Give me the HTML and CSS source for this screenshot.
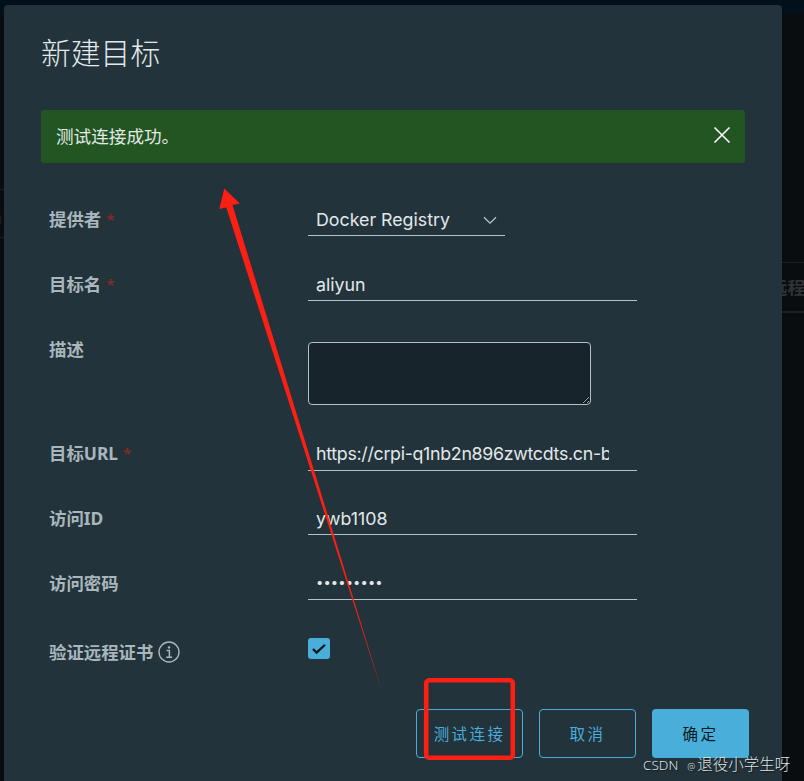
FILE: index.html
```html
<!DOCTYPE html>
<html lang="zh-CN">
<head>
<meta charset="utf-8">
<title>新建目标</title>
<link rel="stylesheet" href="styles.css">
</head>
<body>
<div class="behind">
  <div class="behind-left"><span class="behind-glyph">名</span></div>
  <div class="behind-right"><span>远程证</span></div>
</div>
<main class="modal">
  <h1 class="title">新建目标</h1>
  <div class="alert">
    <span class="alert-text">测试连接成功。</span>
    <svg class="alert-close" width="18" height="18" viewBox="0 0 18 18"><path d="M1.5 1.5 16.5 16.5M16.5 1.5 1.5 16.5" stroke="#fff" stroke-width="1.6" fill="none"/></svg>
  </div>
  <form class="form">
    <div class="row row-provider">
      <label class="label">提供者<i class="req">*</i></label>
      <div class="select-wrap">
        <select class="select"><option>Docker Registry</option></select>
        <svg class="chevron" width="14" height="9" viewBox="0 0 14 9"><path d="M1 1.2 7 7.2 13 1.2" stroke="#b9c4c9" stroke-width="1.3" fill="none"/></svg>
      </div>
    </div>
    <div class="row row-name">
      <label class="label">目标名<i class="req">*</i></label>
      <div class="field"><input class="input" value="aliyun"></div>
    </div>
    <div class="row row-desc">
      <label class="label">描述</label>
      <textarea class="textarea"></textarea>
    </div>
    <div class="row row-url">
      <label class="label">目标URL<i class="req">*</i></label>
      <div class="field"><input class="input" value="https://crpi-q1nb2n896zwtcdts.cn-beijing.personal.cr.aliyuncs.com"></div>
    </div>
    <div class="row row-id">
      <label class="label">访问ID</label>
      <div class="field"><input class="input" value="ywb1108"></div>
    </div>
    <div class="row row-pass">
      <label class="label">访问密码</label>
      <div class="field"><input class="input input-pass" type="password" value="123456789"></div>
    </div>
    <div class="row row-check">
      <label class="label">验证远程证书<svg class="info" width="22" height="22" viewBox="0 0 22 22"><circle cx="11" cy="11" r="10" stroke="#a9b6bb" stroke-width="1.4" fill="none"/><path d="M8.6 9.6H11.4V15.8M8.2 16.2H14.2" stroke="#a9b6bb" stroke-width="1.5" fill="none"/><circle cx="11" cy="6.4" r="1.2" fill="#a9b6bb"/></svg></label>
      <span class="checkbox"><svg width="16" height="12" viewBox="0 0 16 12"><path d="M2 6 5.6 9.6 14 1.8" stroke="#08141b" stroke-width="2.2" fill="none"/></svg></span>
    </div>
  </form>
  <footer class="footer">
    <button class="btn btn-outline btn-test" type="button">测试连接</button>
    <button class="btn btn-outline" type="button">取消</button>
    <button class="btn btn-primary" type="button">确定</button>
  </footer>
</main>
<svg class="annotation" width="804" height="781" viewBox="0 0 804 781">
  <polygon points="224.3,188.5 239.8,203.5 232.5,205 383,695 226.3,207.5 219.3,209" fill="#fb1f14"/>
  <rect x="426.2" y="680.2" width="86.6" height="77.6" rx="3" fill="none" stroke="#fb1f14" stroke-width="4.6"/>
</svg>
<div class="watermark"><span class="wm-latin">CSDN</span> <span class="wm-at">@</span>退役小学生呀</div>
</body>
</html>
```
FILE: styles.css
```css
* { box-sizing: border-box; }
html, body { margin: 0; height: 100%; }
body {
  position: relative;
  width: 804px;
  height: 781px;
  overflow: hidden;
  background: #0a0d10;
  font-family: "Noto Sans", "Noto Sans CJK SC", sans-serif;
  padding: 5px 0 0 4px;
}
.behind { position: absolute; inset: 0; background: linear-gradient(#01101a 0, #01101a 13px, #0a0d10 14px); }
.behind-left { position: absolute; left: 0; top: 189px; width: 4px; height: 49px; border-top: 1px solid #1d2023; border-bottom: 1px solid #1d2023; overflow: hidden; }
.behind-glyph { position: absolute; left: -14px; top: 12px; font-size: 17px; color: #2d3134; }
.behind-right { position: absolute; left: 782px; top: 262px; width: 22px; height: 51px; border-top: 1px solid #1d2023; border-bottom: 2px solid #1d2023; overflow: hidden; }
.behind-right span { position: absolute; left: -12px; top: 11px; white-space: nowrap; font-size: 17.6px; font-weight: 700; color: #2f3335; }
.modal {
  position: relative;
  width: 778px;
  height: 776px;
  background: #22333b;
  border-radius: 4px 4px 0 0;
  padding: 0 37px;
}
.title {
  margin: 0;
  padding-top: 27px;
  height: 105px;
  font-size: 29.8px;
  line-height: 42px;
  font-weight: 300;
  color: #e3e8ea;
}
.alert {
  display: flex;
  align-items: center;
  justify-content: space-between;
  width: 704px;
  height: 53px;
  padding: 0 14px 2px 15px;
  background: #225522;
  border-radius: 3px;
  color: #e3e9e6;
  font-size: 17.6px;
}
.alert-close { display: block; margin-top: -2px; }
.form { padding-left: 8px; }
.row { display: flex; align-items: flex-start; }
.label {
  display: flex;
  align-items: center;
  width: 259px;
  flex: none;
  font-size: 17.4px;
  line-height: 26px;
  font-weight: 700;
  color: #a9b6bb;
}
.req { font-style: normal; font-weight: 400; color: #96291f; margin-left: 5px; font-size: 15px; }
.row-provider { margin-top: 33px; height: 40px; }
.row-name { margin-top: 25px; height: 40px; }
.row-desc { margin-top: 41px; height: 63px; }
.row-url { margin-top: 26px; height: 40px; }
.row-id { margin-top: 24px; height: 40px; }
.row-pass { margin-top: 25px; height: 40px; }
.row-check { margin-top: 38px; height: 22px; }
.row .label { padding-top: 10px; }
.row-url .label { padding-top: 9px; }
.row-desc .label { padding-top: 0; margin-top: -6px; }
.row-check .label { padding-top: 0; height: 26px; margin-top: 1px; }
.select-wrap { position: relative; width: 197px; height: 40px; border-bottom: 1px solid #b4c0c5; }
.select {
  appearance: none;
  width: 100%;
  height: 39px;
  padding: 7px 0 0 8px;
  border: 0;
  background: transparent;
  color: #e3e8ea;
  font: 400 17.8px "Inter", sans-serif;
}
.select option { background: #22333b; }
.chevron { position: absolute; right: 8px; top: 20px; }
.field { width: 329px; height: 40px; border-bottom: 1px solid #b4c0c5; }
.input {
  display: block;
  width: 301px;
  height: 39px;
  padding: 7px 0 0 8px;
  border: 0;
  outline: 0;
  background: transparent;
  color: #e3e8ea;
  font: 400 17.8px "Inter", sans-serif;
}
.row-url .input { padding-top: 5px; letter-spacing: -0.3px; }
.input-pass { font-size: 13px; letter-spacing: 0.1px; padding-top: 5px; }
.textarea {
  display: block;
  width: 283px;
  height: 63px;
  background: #18242b;
  border: 1px solid #b4c0c5;
  border-radius: 4px;
  outline: 0;
}
.info { margin-left: 5px; flex: none; }
.checkbox {
  display: flex;
  align-items: center;
  justify-content: center;
  width: 22px;
  height: 21px;
  background: #49aed9;
  border-radius: 3px;
}
.footer {
  position: absolute;
  right: 33px;
  top: 704px;
  display: flex;
  gap: 16px;
}
.btn {
  height: 49px;
  width: 97px;
  border-radius: 4px;
  font-family: "Noto Sans CJK SC", sans-serif;
  font-size: 15.5px;
  letter-spacing: 2.4px;
  padding: 0 0 2px;
}
.btn-test { width: 107px; }
.btn-outline { background: transparent; border: 1px solid #49aed9; color: #49aed9; }
.btn-primary { background: #49aed9; border: 0; color: #0c1a22; }
.annotation { position: absolute; left: 0; top: 0; pointer-events: none; }
.watermark {
  position: absolute;
  left: 643px;
  top: 754px;
  font-size: 15.5px;
  line-height: 20px;
  color: #dfe4e6;
  text-shadow: 1px 1px 1px rgba(0,0,0,.55);
  white-space: nowrap;
  font-weight: 300;
}
.wm-latin { font-size: 13.5px; }
.wm-at { font-size: 9px; margin: 0 2px 0 5px; }
```
